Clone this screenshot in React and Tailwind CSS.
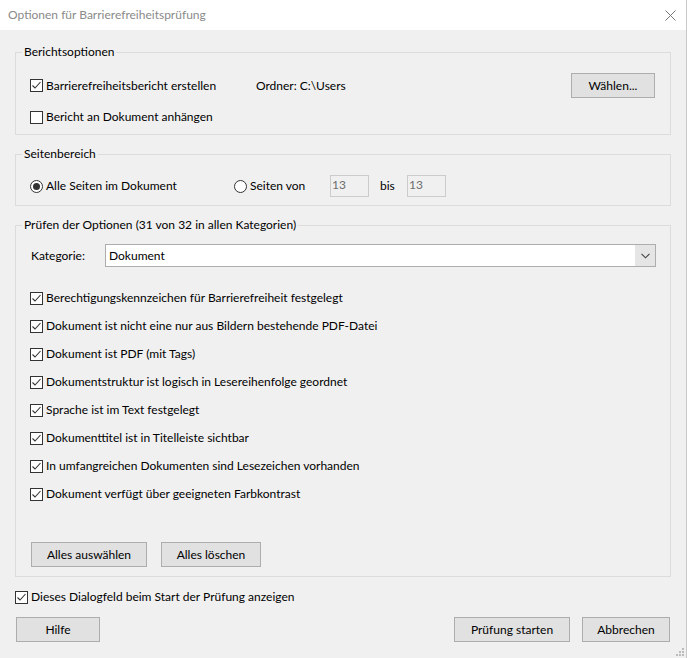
import React from "react";

const Check = ({ checked }) => (
  <span className="w-[13px] h-[13px] shrink-0 border border-[#333333] bg-white flex items-center justify-center">
    {checked && (
      <svg width="11" height="11" viewBox="0 0 11 11">
        <path d="M1.5 5.5 L4 8 L9.5 2" fill="none" stroke="#333333" strokeWidth="1.1" />
      </svg>
    )}
  </span>
);

const Radio = ({ checked }) => (
  <span className="w-[13px] h-[13px] shrink-0 rounded-full border border-[#333333] bg-white flex items-center justify-center">
    {checked && <span className="w-[7px] h-[7px] rounded-full bg-[#333333]"></span>}
  </span>
);

const CheckRow = ({ checked, label }) => (
  <div className="h-4 flex items-center gap-[3px]">
    <Check checked={checked} />
    <span className="leading-4">{label}</span>
  </div>
);

const Button = ({ className, children }) => (
  <button className={`h-[25px] border border-[#adadad] bg-[#e1e1e1] flex items-center justify-center text-black ${className}`}>
    {children}
  </button>
);

const Group = ({ title, className, children }) => (
  <fieldset className={`border border-[#dcdcdc] w-[656px] ${className}`}>
    <legend className="-ml-[8px] px-[2px] leading-4">{title}</legend>
    {children}
  </fieldset>
);

const TextBox = ({ value }) => (
  <div className="w-[39px] h-[22px] border border-[#cccccc] bg-[#f0f0f0] text-[#6d6d6d] pl-[1px] leading-[18px]">
    {value}
  </div>
);

const rules = [
  "Berechtigungskennzeichen für Barrierefreiheit festgelegt",
  "Dokument ist nicht eine nur aus Bildern bestehende PDF-Datei",
  "Dokument ist PDF (mit Tags)",
  "Dokumentstruktur ist logisch in Lesereihenfolge geordnet",
  "Sprache ist im Text festgelegt",
  "Dokumenttitel ist in Titelleiste sichtbar",
  "In umfangreichen Dokumenten sind Lesezeichen vorhanden",
  "Dokument verfügt über geeigneten Farbkontrast",
];

export default function App() {
  return (
    <div
      className="w-[687px] h-[658px] bg-[#f0f0f0] text-[12px] text-black relative overflow-hidden border-r border-[#c8c8c8]"
      style={{ fontFamily: 'Lato, "Liberation Sans", sans-serif' }}
    >
      {/* Title bar */}
      <div className="h-[30px] bg-white flex items-center justify-between pl-2 pr-[10px]">
        <span className="text-[#8a8a8a]">Optionen für Barrierefreiheitsprüfung</span>
        <svg width="11" height="11" viewBox="0 0 11 11">
          <path d="M0.5 0.5 L10.5 10.5 M10.5 0.5 L0.5 10.5" stroke="#7a7a7a" strokeWidth="1" />
        </svg>
      </div>

      <div className="pl-[15px] pt-[14px] flex flex-col">
        {/* Berichtsoptionen */}
        <Group title="Berichtsoptionen" className="pl-[14px] pr-[15px] pt-[13px] pb-[9px]">
          <div className="h-[25px] flex items-center">
            <div className="w-[226px]">
              <CheckRow checked label="Barrierefreiheitsbericht erstellen" />
            </div>
            <span>Ordner: C:\Users</span>
            <Button className="ml-auto w-[84px]">Wählen...</Button>
          </div>
          <div className="mt-[11px]">
            <CheckRow label="Bericht an Dokument anhängen" />
          </div>
        </Group>

        {/* Seitenbereich */}
        <Group title="Seitenbereich" className="mt-[11px] pl-[14px] pr-[15px] pt-[13px] pb-[8px]">
          <div className="h-[22px] flex items-center">
            <div className="w-[204px] flex items-center gap-[3px]">
              <Radio checked />
              <span>Alle Seiten im Dokument</span>
            </div>
            <div className="w-[96px] flex items-center gap-[3px]">
              <Radio />
              <span>Seiten von</span>
            </div>
            <TextBox value="13" />
            <span className="ml-[11px] w-[27px]">bis</span>
            <TextBox value="13" />
          </div>
        </Group>

        {/* Prüfen der Optionen */}
        <Group title="Prüfen der Optionen (31 von 32 in allen Kategorien)" className="mt-[11px] pl-[14px] pr-[14px] pt-[11px] pb-[9px]">
          <div className="h-[23px] flex items-center">
            <span className="w-[75px] pl-[1px]">Kategorie:</span>
            <div className="flex-1 h-[23px] border border-[#adadad] bg-white flex">
              <span className="flex-1 pl-[3px] leading-[21px]">Dokument</span>
              <span className="w-[20px] bg-[#e5e5e5] flex items-center justify-center">
                <svg width="9" height="6" viewBox="0 0 9 6">
                  <path d="M0.5 0.8 L4.5 4.8 L8.5 0.8" fill="none" stroke="#444444" strokeWidth="1.1" />
                </svg>
              </span>
            </div>
          </div>
          <div className="mt-[23px] flex flex-col gap-3">
            {rules.map((r) => (
              <CheckRow key={r} checked label={r} />
            ))}
          </div>
          <div className="mt-[40px] flex gap-[14px] pl-[1px]">
            <Button className="w-[116px] h-[24px]">Alles auswählen</Button>
            <Button className="w-[100px] h-[24px]">Alles löschen</Button>
          </div>
        </Group>

        <div className="mt-3">
          <CheckRow checked label="Dieses Dialogfeld beim Start der Prüfung anzeigen" />
        </div>

        <div className="mt-3 flex w-[655px] pl-[1px]">
          <Button className="w-[84px]">Hilfe</Button>
          <Button className="ml-auto w-[116px]">Prüfung starten</Button>
          <Button className="ml-[12px] w-[88px]">Abbrechen</Button>
        </div>
      </div>

      {/* resize grip */}
      <svg className="absolute right-[2px] bottom-[2px]" width="9" height="9" viewBox="0 0 9 9">
        {[[7, 1], [7, 4], [4, 4], [7, 7], [4, 7], [1, 7]].map(([x, y], i) => (
          <rect key={i} x={x} y={y} width="2" height="2" fill="#bcbcbc" />
        ))}
      </svg>
    </div>
  );
}
